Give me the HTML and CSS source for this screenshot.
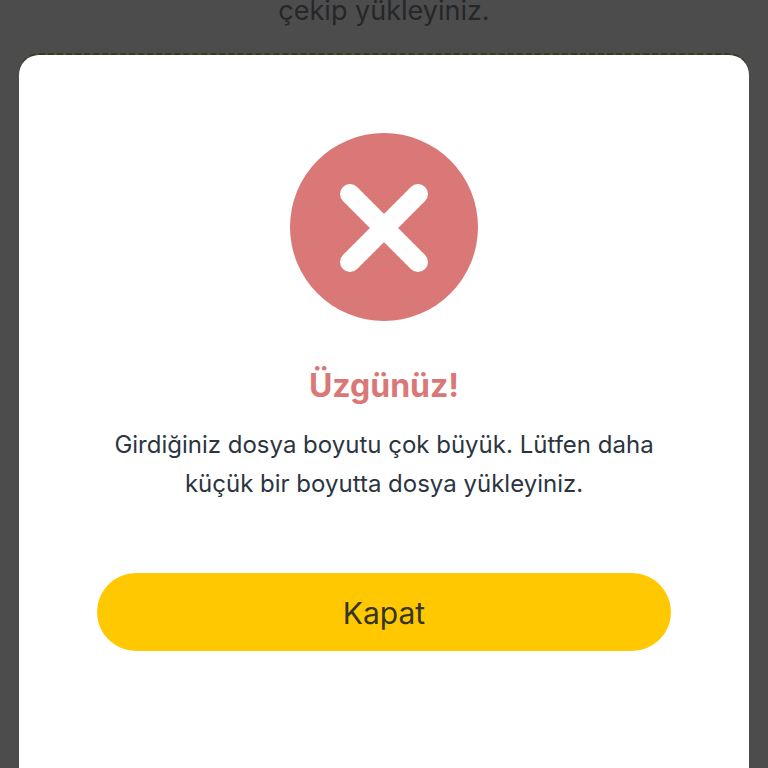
FILE: index.html
```html
<!DOCTYPE html>
<html lang="tr">
<head>
  <meta charset="UTF-8">
  <title>Dosya Yükle</title>
  <meta name="viewport" content="width=device-width,initial-scale=1">
  <link rel="stylesheet" href="styles.css">
</head>
<body>

  <main class="page">
    <p class="hint">çekip yükleyiniz.</p>
    <div class="dropzone"></div>
  </main>

  <div class="overlay">
    <div class="modal" role="dialog" aria-modal="true" aria-labelledby="modal-title">
      <svg class="icon" viewBox="0 0 188 188" aria-hidden="true">
        <circle cx="94" cy="94" r="94" fill="#da7878"/>
        <path d="M60 61 L128 129 M128 61 L60 129" stroke="#fff" stroke-width="20" stroke-linecap="round"/>
      </svg>
      <h2 class="title" id="modal-title">Üzgünüz!</h2>
      <p class="message">Girdiğiniz dosya boyutu çok büyük. Lütfen daha küçük bir boyutta dosya yükleyiniz.</p>
      <button class="close" type="button">Kapat</button>
    </div>
  </div>

</body>
</html>
```

FILE: styles.css
```css
* { box-sizing: border-box; }

body {
  margin: 0;
  background: #fff;
  color: #2b3541;
  font-family: Inter, "Liberation Sans", sans-serif;
  overflow: hidden;
}

.page { padding: 0 19px; text-align: center; }
.hint { margin: 0; font-size: 27px; line-height: 22px; color: #7c838c; }
.dropzone {
  height: 400px;
  margin-top: 31px;
  border: 3px dashed #c4c766;
  border-radius: 20px;
}

.overlay {
  position: fixed;
  inset: 0;
  display: flex;
  padding: 55px 19px 0;
  background: rgba(0, 0, 0, 0.7);
}

.modal {
  flex: 1;
  display: flex;
  flex-direction: column;
  align-items: center;
  padding: 78px 78px 0;
  background: #fff;
  border-radius: 20px 20px 0 0;
  text-align: center;
}

.icon { width: 188px; height: 188px; flex: none; }
.title {
  margin: 44px 0 18px;
  font-size: 32px;
  line-height: 42px;
  font-weight: 700;
  color: #da7878;
}
.message { margin: 0; font-size: 24px; line-height: 39px; }
.close {
  width: 100%;
  height: 78px;
  margin-top: 70px;
  padding: 2px 0 0;
  border: 0;
  border-radius: 39px;
  background: #ffc800;
  color: #343427;
  font-family: inherit;
  font-size: 30px;
  cursor: pointer;
}
```
